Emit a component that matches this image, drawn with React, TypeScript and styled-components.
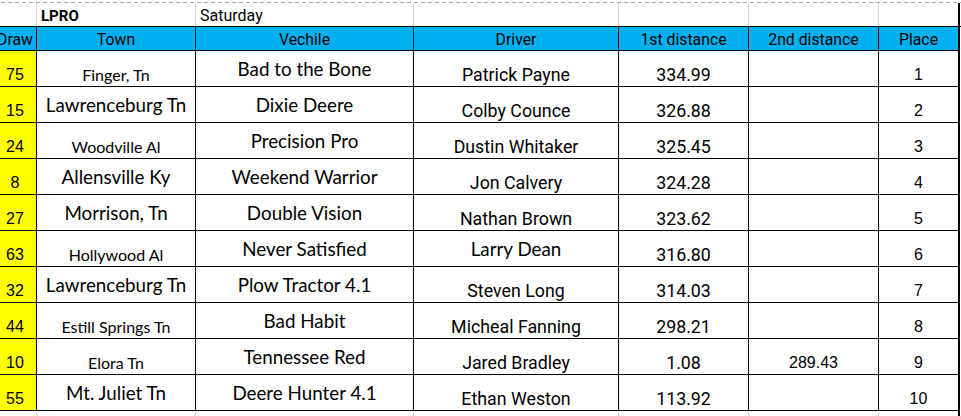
import React from "react";
import styled, { createGlobalStyle, css } from "styled-components";

const GlobalStyle = createGlobalStyle`
  html, body { margin: 0; padding: 0; background: #fff; }
  body { width: 961px; height: 416px; overflow: hidden; color: #000; }
`;

type Face = "calibri" | "calibriSm" | "aptos" | "arial" | "head";

const faces: Record<Face, ReturnType<typeof css>> = {
  calibri: css`
    font-family: Lato, "Open Sans", sans-serif;
    font-size: 18.8px;
    padding-bottom: 7.5px;
  `,
  calibriSm: css`
    font-family: Lato, "Open Sans", sans-serif;
    font-size: 16px;
    padding-bottom: 3px;
  `,
  aptos: css`
    font-family: Roboto, "Noto Sans", sans-serif;
    font-size: 17.8px;
    padding-bottom: 2.5px;
  `,
  arial: css`
    font-family: "Liberation Sans", Arial, sans-serif;
    font-size: 16px;
    padding-bottom: 3px;
  `,
  head: css`
    font-family: Roboto, "Noto Sans", sans-serif;
    font-size: 15.8px;
    padding-bottom: 2.5px;
  `,
};

const COLS = "43px 159px 218px 205px 130px 130px 81px";

const Sheet = styled.div`
  margin-left: -6px;
  width: 967px;
  display: flex;
  flex-direction: column;
`;

const PageBreak = styled.div`
  margin-top: 2px;
  height: 1px;
  background-image: repeating-linear-gradient(
    to right,
    #a6a6a6 0,
    #a6a6a6 4px,
    transparent 4px,
    transparent 7px
  );
`;

const TitleRow = styled.div`
  display: grid;
  grid-template-columns: ${COLS};
  height: 23px;
`;

const TitleCell = styled.div<{ $bold?: boolean; $last?: boolean }>`
  box-sizing: border-box;
  display: flex;
  align-items: flex-end;
  padding: 0 0 2.5px 4px;
  border-right: ${(p) => (p.$last ? "2px solid #000" : "1px solid #d4d4d4")};
  font-family: Roboto, "Noto Sans", sans-serif;
  font-size: ${(p) => (p.$bold ? "15px" : "16px")};
  font-weight: ${(p) => (p.$bold ? 700 : 400)};
  line-height: 1;
  white-space: nowrap;
`;

const HeaderRow = styled.div`
  display: grid;
  grid-template-columns: ${COLS};
  height: 25px;
  border-top: 1px solid #000;
  box-sizing: border-box;
`;

const DataRow = styled.div`
  display: grid;
  grid-template-columns: ${COLS};
  height: 36px;
`;

const FillerRow = styled.div`
  display: grid;
  grid-template-columns: ${COLS};
  height: 6px;
`;

const FillerCell = styled.div<{ $last?: boolean }>`
  border-right: ${(p) => (p.$last ? "2px solid #000" : "1px solid #d4d4d4")};
`;

const Cell = styled.div<{ $face: Face; $bg?: string; $last?: boolean }>`
  box-sizing: border-box;
  display: flex;
  align-items: flex-end;
  justify-content: center;
  overflow: hidden;
  white-space: nowrap;
  line-height: 1;
  color: #000;
  background: ${(p) => p.$bg ?? "#fff"};
  border-right: ${(p) => (p.$last ? "2px solid #000" : "1px solid #000")};
  border-bottom: 1px solid #000;
  ${(p) => faces[p.$face]}
`;

type Row = {
  draw: string;
  town: string;
  townFace: Face;
  vehicle: string;
  driver: string;
  driverFace: Face;
  first: string;
  second: string;
  place: string;
};

const rows: Row[] = [
  { draw: "75", town: "Finger, Tn", townFace: "calibriSm", vehicle: "Bad to the Bone", driver: "Patrick Payne", driverFace: "aptos", first: "334.99", second: "", place: "1" },
  { draw: "15", town: "Lawrenceburg Tn", townFace: "calibri", vehicle: "Dixie Deere", driver: "Colby Counce", driverFace: "aptos", first: "326.88", second: "", place: "2" },
  { draw: "24", town: "Woodville Al", townFace: "calibriSm", vehicle: "Precision Pro", driver: "Dustin Whitaker", driverFace: "aptos", first: "325.45", second: "", place: "3" },
  { draw: "8", town: "Allensville Ky", townFace: "calibri", vehicle: "Weekend Warrior", driver: "Jon Calvery", driverFace: "aptos", first: "324.28", second: "", place: "4" },
  { draw: "27", town: "Morrison, Tn", townFace: "calibri", vehicle: "Double Vision", driver: "Nathan Brown", driverFace: "aptos", first: "323.62", second: "", place: "5" },
  { draw: "63", town: "Hollywood Al", townFace: "calibriSm", vehicle: "Never Satisfied", driver: "Larry Dean", driverFace: "calibri", first: "316.80", second: "", place: "6" },
  { draw: "32", town: "Lawrenceburg Tn", townFace: "calibri", vehicle: "Plow Tractor 4.1", driver: "Steven Long", driverFace: "aptos", first: "314.03", second: "", place: "7" },
  { draw: "44", town: "Estill Springs Tn", townFace: "calibriSm", vehicle: "Bad Habit", driver: "Micheal Fanning", driverFace: "aptos", first: "298.21", second: "", place: "8" },
  { draw: "10", town: "Elora Tn", townFace: "calibriSm", vehicle: "Tennessee Red", driver: "Jared Bradley", driverFace: "aptos", first: "1.08", second: "289.43", place: "9" },
  { draw: "55", town: "Mt. Juliet Tn", townFace: "calibri", vehicle: "Deere Hunter 4.1", driver: "Ethan Weston", driverFace: "aptos", first: "113.92", second: "", place: "10" },
];

const headers = ["Draw", "Town", "Vechile", "Driver", "1st distance", "2nd distance", "Place"];

const BLUE = "#00b0f0";
const YELLOW = "#ffff00";

export default function App() {
  return (
    <>
      <GlobalStyle />
      <Sheet>
        <PageBreak />
        <TitleRow>
          <TitleCell />
          <TitleCell $bold>LPRO</TitleCell>
          <TitleCell>Saturday</TitleCell>
          <TitleCell />
          <TitleCell />
          <TitleCell />
          <TitleCell $last />
        </TitleRow>
        <HeaderRow>
          {headers.map((h, i) => (
            <Cell key={h} $face="head" $bg={BLUE} $last={i === headers.length - 1}>
              {h}
            </Cell>
          ))}
        </HeaderRow>
        {rows.map((r) => (
          <DataRow key={r.place}>
            <Cell $face="arial" $bg={YELLOW}>{r.draw}</Cell>
            <Cell $face={r.townFace}>{r.town}</Cell>
            <Cell $face="calibri">{r.vehicle}</Cell>
            <Cell $face={r.driverFace}>{r.driver}</Cell>
            <Cell $face="aptos">{r.first}</Cell>
            <Cell $face="arial">{r.second}</Cell>
            <Cell $face="arial" $last>{r.place}</Cell>
          </DataRow>
        ))}
        <FillerRow>
          {headers.map((h, i) => (
            <FillerCell key={h} $last={i === headers.length - 1} />
          ))}
        </FillerRow>
      </Sheet>
    </>
  );
}
